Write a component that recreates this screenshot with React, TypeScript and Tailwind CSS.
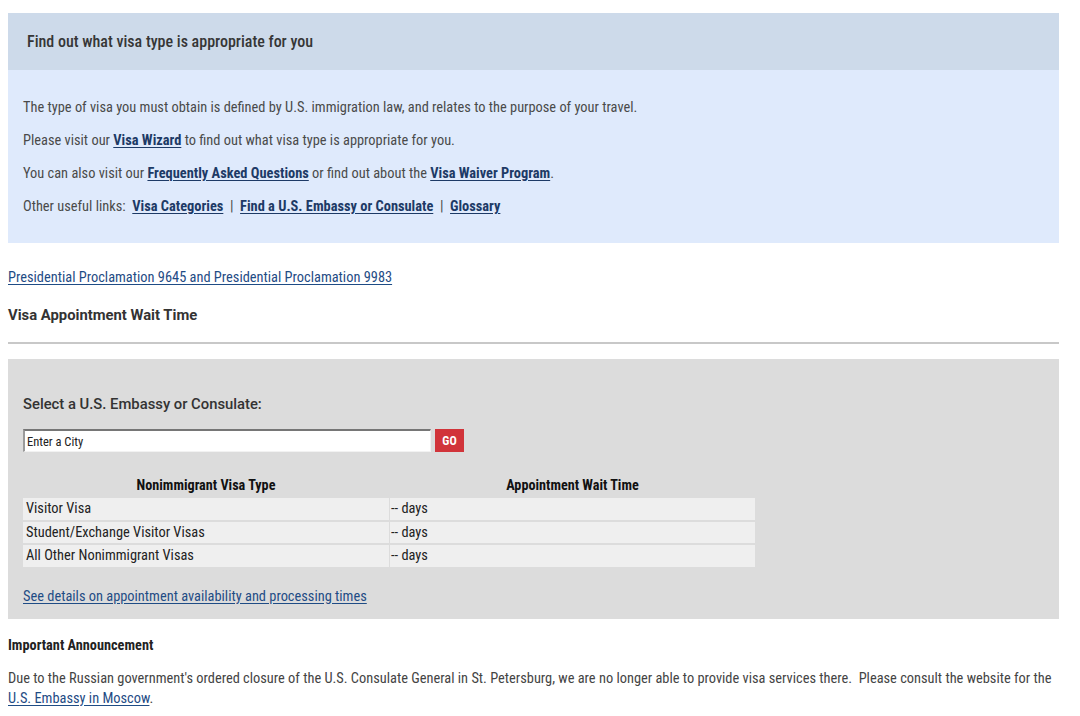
const cond = "font-['Roboto_Condensed','Liberation_Sans_Narrow',sans-serif]";
const rob = "font-['Roboto','Liberation_Sans',sans-serif]";

const rows = [
  { type: "Visitor Visa", wait: "-- days" },
  { type: "Student/Exchange Visitor Visas", wait: "-- days" },
  { type: "All Other Nonimmigrant Visas", wait: "-- days" },
];

function BoldLink({ children }: { children: React.ReactNode }) {
  return (
    <a href="#" className="font-bold text-[#1d3a66] underline underline-offset-2">
      {children}
    </a>
  );
}

export default function App() {
  return (
    <div className={`${cond} w-[1080px] bg-white px-2 pt-[13px] pb-4 text-[14.4px] text-[#444]`}>
      <div className="w-[1051px]">
        {/* visa type box */}
        <section className="bg-[#dfeafc]">
          <h2 className="flex h-[57px] items-center bg-[#cddaea] px-[19px] text-[16px] font-medium text-[#363636]">
            Find out what visa type is appropriate for you
          </h2>
          <div className="flex flex-col gap-[13px] px-[15px] pt-[28px] pb-[26px] leading-[20px] text-[#4a4a4a]">
            <p>The type of visa you must obtain is defined by U.S. immigration law, and relates to the purpose of your travel.</p>
            <p>
              Please visit our <BoldLink>Visa Wizard</BoldLink> to find out what visa type is appropriate for you.
            </p>
            <p>
              You can also visit our <BoldLink>Frequently Asked Questions</BoldLink> or find out about the{" "}
              <BoldLink>Visa Waiver Program</BoldLink>.
            </p>
            <p>
              Other useful links:&nbsp; <BoldLink>Visa Categories</BoldLink>&nbsp; |&nbsp;{" "}
              <BoldLink>Find a U.S. Embassy or Consulate</BoldLink>&nbsp; |&nbsp; <BoldLink>Glossary</BoldLink>
            </p>
          </div>
        </section>

        <p className="mt-[25px] leading-[20px]">
          <a href="#" className="text-[#1f4c85] underline underline-offset-2">
            Presidential Proclamation 9645 and Presidential Proclamation 9983
          </a>
        </p>

        <h3 className={`${rob} mt-[16px] text-[14.8px] leading-[22px] font-bold text-[#333]`}>Visa Appointment Wait Time</h3>
        <hr className="mt-[16px] border-0 border-t-2 border-[#c8c8c8]" />

        {/* wait time panel */}
        <section className="mt-[15px] bg-[#dcdcdc] px-[15px] pt-[34px] pb-[12px]">
          <h4 className={`${rob} text-[14.8px] leading-[22px] font-medium text-[#333]`}>Select a U.S. Embassy or Consulate:</h4>
          <div className="mt-[14px] flex gap-[4px]">
            <input
              type="text"
              placeholder="Enter a City"
              className="h-[23px] w-[408px] border-t-2 border-l-2 border-r border-b border-t-[#767676] border-l-[#9a9a9a] border-r-[#f2f2f2] border-b-[#f2f2f2] bg-white px-[2px] text-[12.5px] text-[#222] placeholder:text-[#222] outline-none"
            />
            <button className="h-[23px] w-[29px] bg-[#d1343a] text-[12px] font-bold text-white">GO</button>
          </div>

          <div className="mt-[23px] grid w-[732px] grid-cols-[366px_365px] gap-x-[1px] gap-y-[2px]">
            <div className="h-[21px] text-center text-[14.2px] leading-[21px] font-bold text-[#111]">Nonimmigrant Visa Type</div>
            <div className="h-[21px] text-center text-[14.2px] leading-[21px] font-bold text-[#111]">Appointment Wait Time</div>
            {rows.map((r) => (
              <div key={r.type} className="contents">
                <div className="h-[21.5px] bg-[#efefef] px-[3px] leading-[21.5px] text-[#222]">{r.type}</div>
                <div className="h-[21.5px] bg-[#efefef] px-[1px] leading-[21.5px] text-[#222]">{r.wait}</div>
              </div>
            ))}
          </div>

          <p className="mt-[20px] leading-[20px]">
            <a href="#" className="text-[#1f4c85] underline underline-offset-2">
              See details on appointment availability and processing times
            </a>
          </p>
        </section>

        <h4 className="mt-[16px] text-[14.3px] leading-[20px] font-bold text-[#222]">Important Announcement</h4>
        <p className="mt-[14px] leading-[20px] text-[#444]">
          Due to the Russian government's ordered closure of the U.S. Consulate General in St. Petersburg, we are no longer
          able to provide visa services there.&nbsp; Please consult the website for the{" "}
          <a href="#" className="text-[#1f4c85] underline underline-offset-2">
            U.S. Embassy in Moscow
          </a>
          .
        </p>
      </div>
    </div>
  );
}
